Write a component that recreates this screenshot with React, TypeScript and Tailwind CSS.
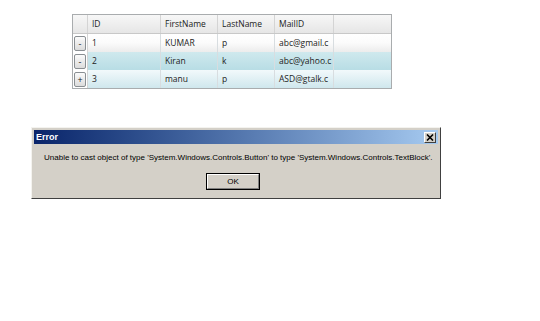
import React from "react";

const cols = [
  { w: "w-[73px]", label: "ID" },
  { w: "w-[57px]", label: "FirstName" },
  { w: "w-[57px]", label: "LastName" },
  { w: "w-[59px]", label: "MailID" },
];

const rows = [
  { btn: "-", vals: ["1", "KUMAR", "p", "abc@gmail.c"], bg: "bg-gradient-to-b from-[#ffffff] via-[#fbfbfb] to-[#ececec]" },
  { btn: "-", vals: ["2", "Kiran", "k", "abc@yahoo.c"], bg: "bg-gradient-to-b from-[#cfe9ee] to-[#b8dde5]" },
  { btn: "+", vals: ["3", "manu", "p", "ASD@gtalk.c"], bg: "bg-gradient-to-b from-[#f2f9fb] to-[#cfe7ed]" },
];

export default function App() {
  return (
    <div className="w-[540px] h-[321px] bg-white overflow-hidden" style={{ fontFamily: "'Liberation Sans', Arial, sans-serif" }}>
      {/* Grid */}
      <div className="ml-[72px] mt-[14px] w-[320px] border border-[#a9acae] bg-white text-[8.5px] text-[#222]" style={{ fontFamily: "'Open Sans', 'Liberation Sans', sans-serif" }}>
        <div className="flex h-[19px] bg-gradient-to-b from-[#f7f7f7] to-[#e6e6e6] border-b border-[#c8c8c8]">
          <div className="w-[15px] border-r border-[#d4d4d4]" />
          {cols.map((c) => (
            <div key={c.label} className={`${c.w} border-r border-[#d4d4d4] flex items-center pl-[4px]`}>
              {c.label}
            </div>
          ))}
          <div className="flex-1" />
        </div>
        {rows.map((r, i) => (
          <div key={i} className={`flex h-[18px] ${r.bg}`}>
            <div className="w-[15px] flex items-center justify-center border-r border-[#d4d4d4] bg-white">
              <div className="w-[12px] h-[15px] border border-[#8a8f93] rounded-[2px] bg-gradient-to-b from-[#fbfbfb] to-[#dcdcdc] flex items-center justify-center text-[9px] leading-none text-[#222]">
                {r.btn}
              </div>
            </div>
            {r.vals.map((v, j) => (
              <div key={j} className={`${cols[j].w} border-r border-[#d8dde0] flex items-center pl-[4px] overflow-hidden whitespace-nowrap`}>
                {v}
              </div>
            ))}
            <div className="flex-1" />
          </div>
        ))}
      </div>

      {/* Error dialog */}
      <div className="ml-[31px] mt-[38px] w-[410px] h-[72px] bg-[#d4d0c8] border-t border-l border-[#f4f3ef] border-r border-b border-r-[#404040] border-b-[#404040] p-[2px] flex flex-col text-black" style={{ fontFamily: "'Liberation Sans', Tahoma, sans-serif" }}>
        <div className="h-[14px] flex items-center justify-between bg-gradient-to-r from-[#0a246a] to-[#a6caf0] pl-[2px] pr-[2px]">
          <span className="text-white font-bold text-[9px] leading-none">Error</span>
          <div className="w-[12px] h-[11px] bg-[#d4d0c8] border-t border-l border-white border-r border-b border-r-[#404040] border-b-[#404040] flex items-center justify-center">
            <svg width="8" height="7" viewBox="0 0 8 7">
              <path d="M1 0.5 L7 6.5 M7 0.5 L1 6.5" stroke="#000" strokeWidth="1.6" />
            </svg>
          </div>
        </div>
        <div className="pl-[10px] pt-[10px] text-[8px] whitespace-nowrap leading-none">
          Unable to cast object of type 'System.Windows.Controls.Button' to type 'System.Windows.Controls.TextBlock'.
        </div>
        <div className="flex ml-[172px] mt-[11px]">
          <div className="w-[54px] h-[17px] border border-black">
            <div className="w-full h-full border-t border-l border-white border-r border-b border-r-[#808080] border-b-[#808080] flex items-center justify-center text-[8px]">
              OK
            </div>
          </div>
        </div>
      </div>
    </div>
  );
}
